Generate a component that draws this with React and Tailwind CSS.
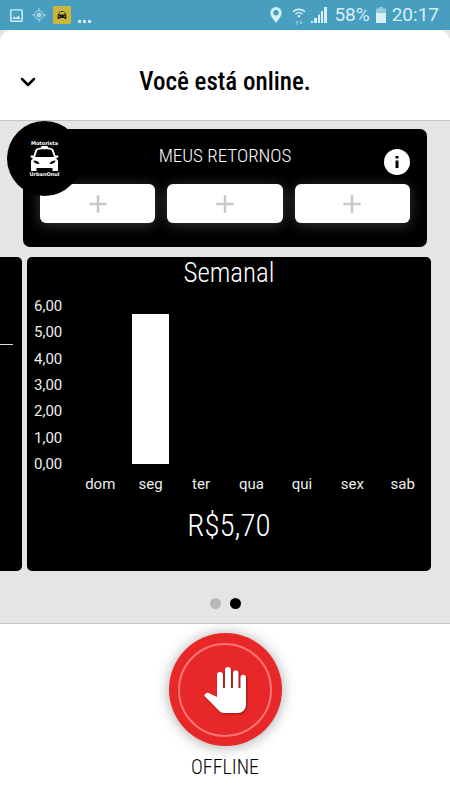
import React from 'react';
import { MdWifi, MdOutlineImage } from 'react-icons/md';
import { ChevronDown, Plus } from 'lucide-react';

const scale = ['6,00', '5,00', '4,00', '3,00', '2,00', '1,00', '0,00'];

const MAX_VALUE = 6;

const week = [
  { day: 'dom', value: 0 },
  { day: 'seg', value: 5.7 },
  { day: 'ter', value: 0 },
  { day: 'qua', value: 0 },
  { day: 'qui', value: 0 },
  { day: 'sex', value: 0 },
  { day: 'sab', value: 0 }
];

const TaxiIcon = ({ className }) => (
  <svg viewBox="0 0 28 25" className={className} fill="currentColor" aria-hidden="true">
    <path
      fillRule="evenodd"
      d="M11 0h6l.5 1.5C21 2 22.5 2.500 23.300 4.500L25 9.500h2.500c.8.500.5 1.800-.5 2.200l-1.500.8c1.300.8 2 1.800 2 3.500v9h-5.500v-3H6v3H.5v-9c0-1.700.7-2.700 2-3.500L1 11.700C0 11.300-.3 10 .5 9.500H3l1.700-5C5.500 2.500 7 2 10.500 1.500zM8.500 3.500C7.500 3.700 7 4 6.600 5L4.500 11h19l-2.100-6c-.4-1-.9-1.300-1.900-1.500-3.500-.5-7.500-.5-11 0zM3 14.500c.2 2.200 2 3.500 6 3.500-.5-2.200-2.500-3.500-6-3.500zM25 14.500c-3.500 0-5.500 1.300-6 3.500 4 0 5.800-1.300 6-3.500z"
    />
  </svg>
);

const HandIcon = ({ className }) => (
  <svg viewBox="0 0 42 46" className={className} fill="currentColor" aria-hidden="true">
    <path d="M13 8a3 3 0 0 1 6 0v13h2V3a3 3 0 0 1 6 0v18h2V5a3 3 0 0 1 5.500 0v16h2V10.500a2.700 2.700 0 0 1 5.500 0V38a8 8 0 0 1-8 8H20c-2 0-3.500-.8-5-2.200L.8 29.200c-.6-.6-.5-1.400.2-2l1.200-1c.8-.7 1.700-.7 2.600-.2L13 30z" />
  </svg>
);

const StatusBar = () => (
  <div className="flex h-[30px] items-center justify-between bg-[#489ebe] pl-2 pr-[11px] text-[#d5eff7]">
    <div className="flex items-center gap-[7px]">
      <MdOutlineImage className="h-[17px] w-[17px]" />
      <svg viewBox="0 0 14 14" className="h-[14px] w-[14px] opacity-70" fill="none" stroke="currentColor" aria-hidden="true">
        <circle cx="7" cy="7" r="4.5" />
        <circle cx="7" cy="7" r="2.5" fill="currentColor" stroke="none" />
        <path d="M7 0v2.5M7 11.500V14M0 7h2.500M11.500 7H14" />
      </svg>
      <span className="flex h-[18px] w-[18px] items-center justify-center bg-[#c9b63c] text-[#1c1a0c]">
        <TaxiIcon className="h-2 w-[10px]" />
      </span>
      <span className="flex gap-[2px] pt-3">
        <i className="h-[3px] w-[3px] bg-current" />
        <i className="h-[3px] w-[3px] bg-current" />
        <i className="h-[3px] w-[3px] bg-current" />
      </span>
    </div>
    <div className="flex items-center text-[19px] leading-[30px]">
      <svg viewBox="0 0 12 16" className="mr-[9px] h-4 w-3" fill="currentColor" aria-hidden="true">
        <path fillRule="evenodd" d="M6 0a5.700 5.700 0 0 1 5.700 5.700C11.700 9.500 8 12.500 6 16 4 12.500.3 9.500.3 5.700A5.700 5.700 0 0 1 6 0zM6 3a2.700 2.700 0 1 0 0 5.400A2.700 2.700 0 0 0 6 3z" />
      </svg>
      <span className="mr-1 flex w-4 flex-col items-center">
        <MdWifi className="h-[14px] w-4" />
        <svg viewBox="0 0 8 5" className="h-[5px] w-2" fill="none" stroke="currentColor" opacity=".6" aria-hidden="true">
          <path d="M2 5V1M.5 2.500L2 1l1.500 1.500M6 0v4M4.500 2.500L6 4l1.500-1.500" />
        </svg>
      </span>
      <svg viewBox="0 0 16 16" className="mr-[7px] h-4 w-4" fill="currentColor" aria-hidden="true">
        <path d="M0 14h2v2H0zM3 11h3v5H3zM7 7.500h2v8.500H7zM10 4h2v12h-2zM13 0h3v16h-3z" />
      </svg>
      <span>58%</span>
      <svg viewBox="0 0 10 16" className="mx-[6px] h-4 w-[10px]" fill="currentColor" aria-hidden="true">
        <path opacity=".55" d="M3 0h4v1.500h3V6H0V1.500h3z" />
        <path d="M0 6h10v10H0z" />
      </svg>
      <span>20:17</span>
    </div>
  </div>
);

const Header = () => (
  <div className="bg-[#e5e5e5]">
    <header className="grid h-[91px] grid-cols-[24px_1fr_24px] items-center rounded-t-[12px] border-b border-[#c4c4c4] bg-white px-4 pt-[14px]">
      <button type="button" aria-label="Fechar">
        <ChevronDown className="h-6 w-6" strokeWidth={2.5} />
      </button>
      <h1 className="text-center text-[25px] leading-8 font-medium">Você está online.</h1>
    </header>
  </div>
);

const Logo = () => (
  <div className="absolute top-0 left-[7px] flex h-[75px] w-[75px] flex-col items-center justify-center rounded-full bg-black text-white">
    <span className="font-['DejaVu_Sans'] text-[5px] leading-[6px] font-bold">Motorista</span>
    <TaxiIcon className="h-[25px] w-[29px]" />
    <span className="font-['DejaVu_Sans'] text-[5px] leading-[6px] font-bold">UrbanOnul</span>
  </div>
);

const ReturnsCard = () => (
  <section className="mx-[23px] rounded-[7px] bg-black px-[17px] pb-6">
    <div className="grid h-[55px] grid-cols-[26px_1fr_26px] items-center">
      <h2 className="col-start-2 pb-[2px] text-center text-[19px] leading-6 font-light text-white">MEUS RETORNOS</h2>
      <button
        type="button"
        aria-label="Informações"
        className="mt-[11px] flex h-[26px] w-[26px] items-center justify-center rounded-full bg-white"
      >
        <svg viewBox="0 0 4 12" className="h-3 w-1" aria-hidden="true">
          <path d="M.5 0h3v2.500h-3zM.5 4.500h3V12h-3z" />
        </svg>
      </button>
    </div>
    <div className="grid grid-cols-3 gap-3">
      {[1, 2, 3].map((slot) => (
        <button
          key={slot}
          type="button"
          aria-label={`Adicionar retorno ${slot}`}
          className="flex h-[39px] items-center justify-center rounded-[6px] bg-white text-[#c8c8c8] shadow-[0_2px_14px_rgba(255,255,255,0.22)]"
        >
          <Plus className="h-[30px] w-[30px]" strokeWidth={2} strokeLinecap="butt" />
        </button>
      ))}
    </div>
  </section>
);

const WeeklyChart = () => (
  <div className="flex pl-[7px] text-[15px] leading-5 text-[#eeeeee]">
    <div className="flex h-[178px] w-[41px] flex-col justify-between">
      {scale.map((label) => (
        <span key={label}>{label}</span>
      ))}
    </div>
    <div className="grid flex-1 grid-cols-7 pr-[3px] text-center">
      {week.map(({ day, value }) => (
        <div key={day}>
          <div className="mt-[10px] flex h-[158px] items-end justify-center">
            <div className="w-[37px] bg-white" style={{ height: `${(value / MAX_VALUE) * 100}%` }} />
          </div>
          <span className="mt-[10px] block">{day}</span>
        </div>
      ))}
    </div>
  </div>
);

const Carousel = () => (
  <div className="mt-[10px] flex justify-end gap-[5px] overflow-hidden pr-[19px] pl-[27px]">
    <section className="w-full shrink-0 rounded-[5px] bg-black px-[9px] pt-[87px]">
      <div className="h-px bg-[#dddddd]" />
    </section>
    <section className="w-full shrink-0 rounded-[5px] bg-black pb-[27px] text-white">
      <h2 className="pb-[7px] text-center text-[27px] leading-8 font-light">Semanal</h2>
      <WeeklyChart />
      <p className="mt-[14px] text-center text-[31px] leading-9 font-light">R$5,70</p>
    </section>
  </div>
);

export default function App() {
  return (
    <div className="min-h-screen bg-white font-['Roboto',sans-serif] text-black [&_h1]:font-['Roboto_Condensed',sans-serif] [&_h2]:font-['Roboto_Condensed',sans-serif] [&_p]:font-['Roboto_Condensed',sans-serif]">
      <StatusBar />
      <Header />
      <main className="relative border-b border-[#c4c4c4] bg-[#e5e5e5] pt-2 pb-[14px]">
        <ReturnsCard />
        <Logo />
        <Carousel />
        <div className="mt-[27px] flex justify-center gap-[9px]">
          <button type="button" aria-label="Página 1" className="h-[11px] w-[11px] rounded-full bg-[#b8b8b8]" />
          <button type="button" aria-label="Página 2" className="h-[11px] w-[11px] rounded-full bg-black" />
        </div>
      </main>
      <footer className="flex flex-col items-center pt-[9px]">
        <button
          type="button"
          aria-labelledby="offline-label"
          className="flex h-[113px] w-[113px] items-center justify-center rounded-full bg-[#e82828] shadow-[0_1px_14px_rgba(0,0,0,0.35)]"
        >
          <span className="flex h-[94px] w-[94px] items-center justify-center rounded-full border-2 border-[#ff7676] text-white">
            <HandIcon className="h-[46px] w-[42px] drop-shadow-[1px_1px_1px_rgba(0,0,0,0.4)]" />
          </span>
        </button>
        <p id="offline-label" className="mt-[9px] text-[20px] leading-6 font-light">OFFLINE</p>
      </footer>
    </div>
  );
}
